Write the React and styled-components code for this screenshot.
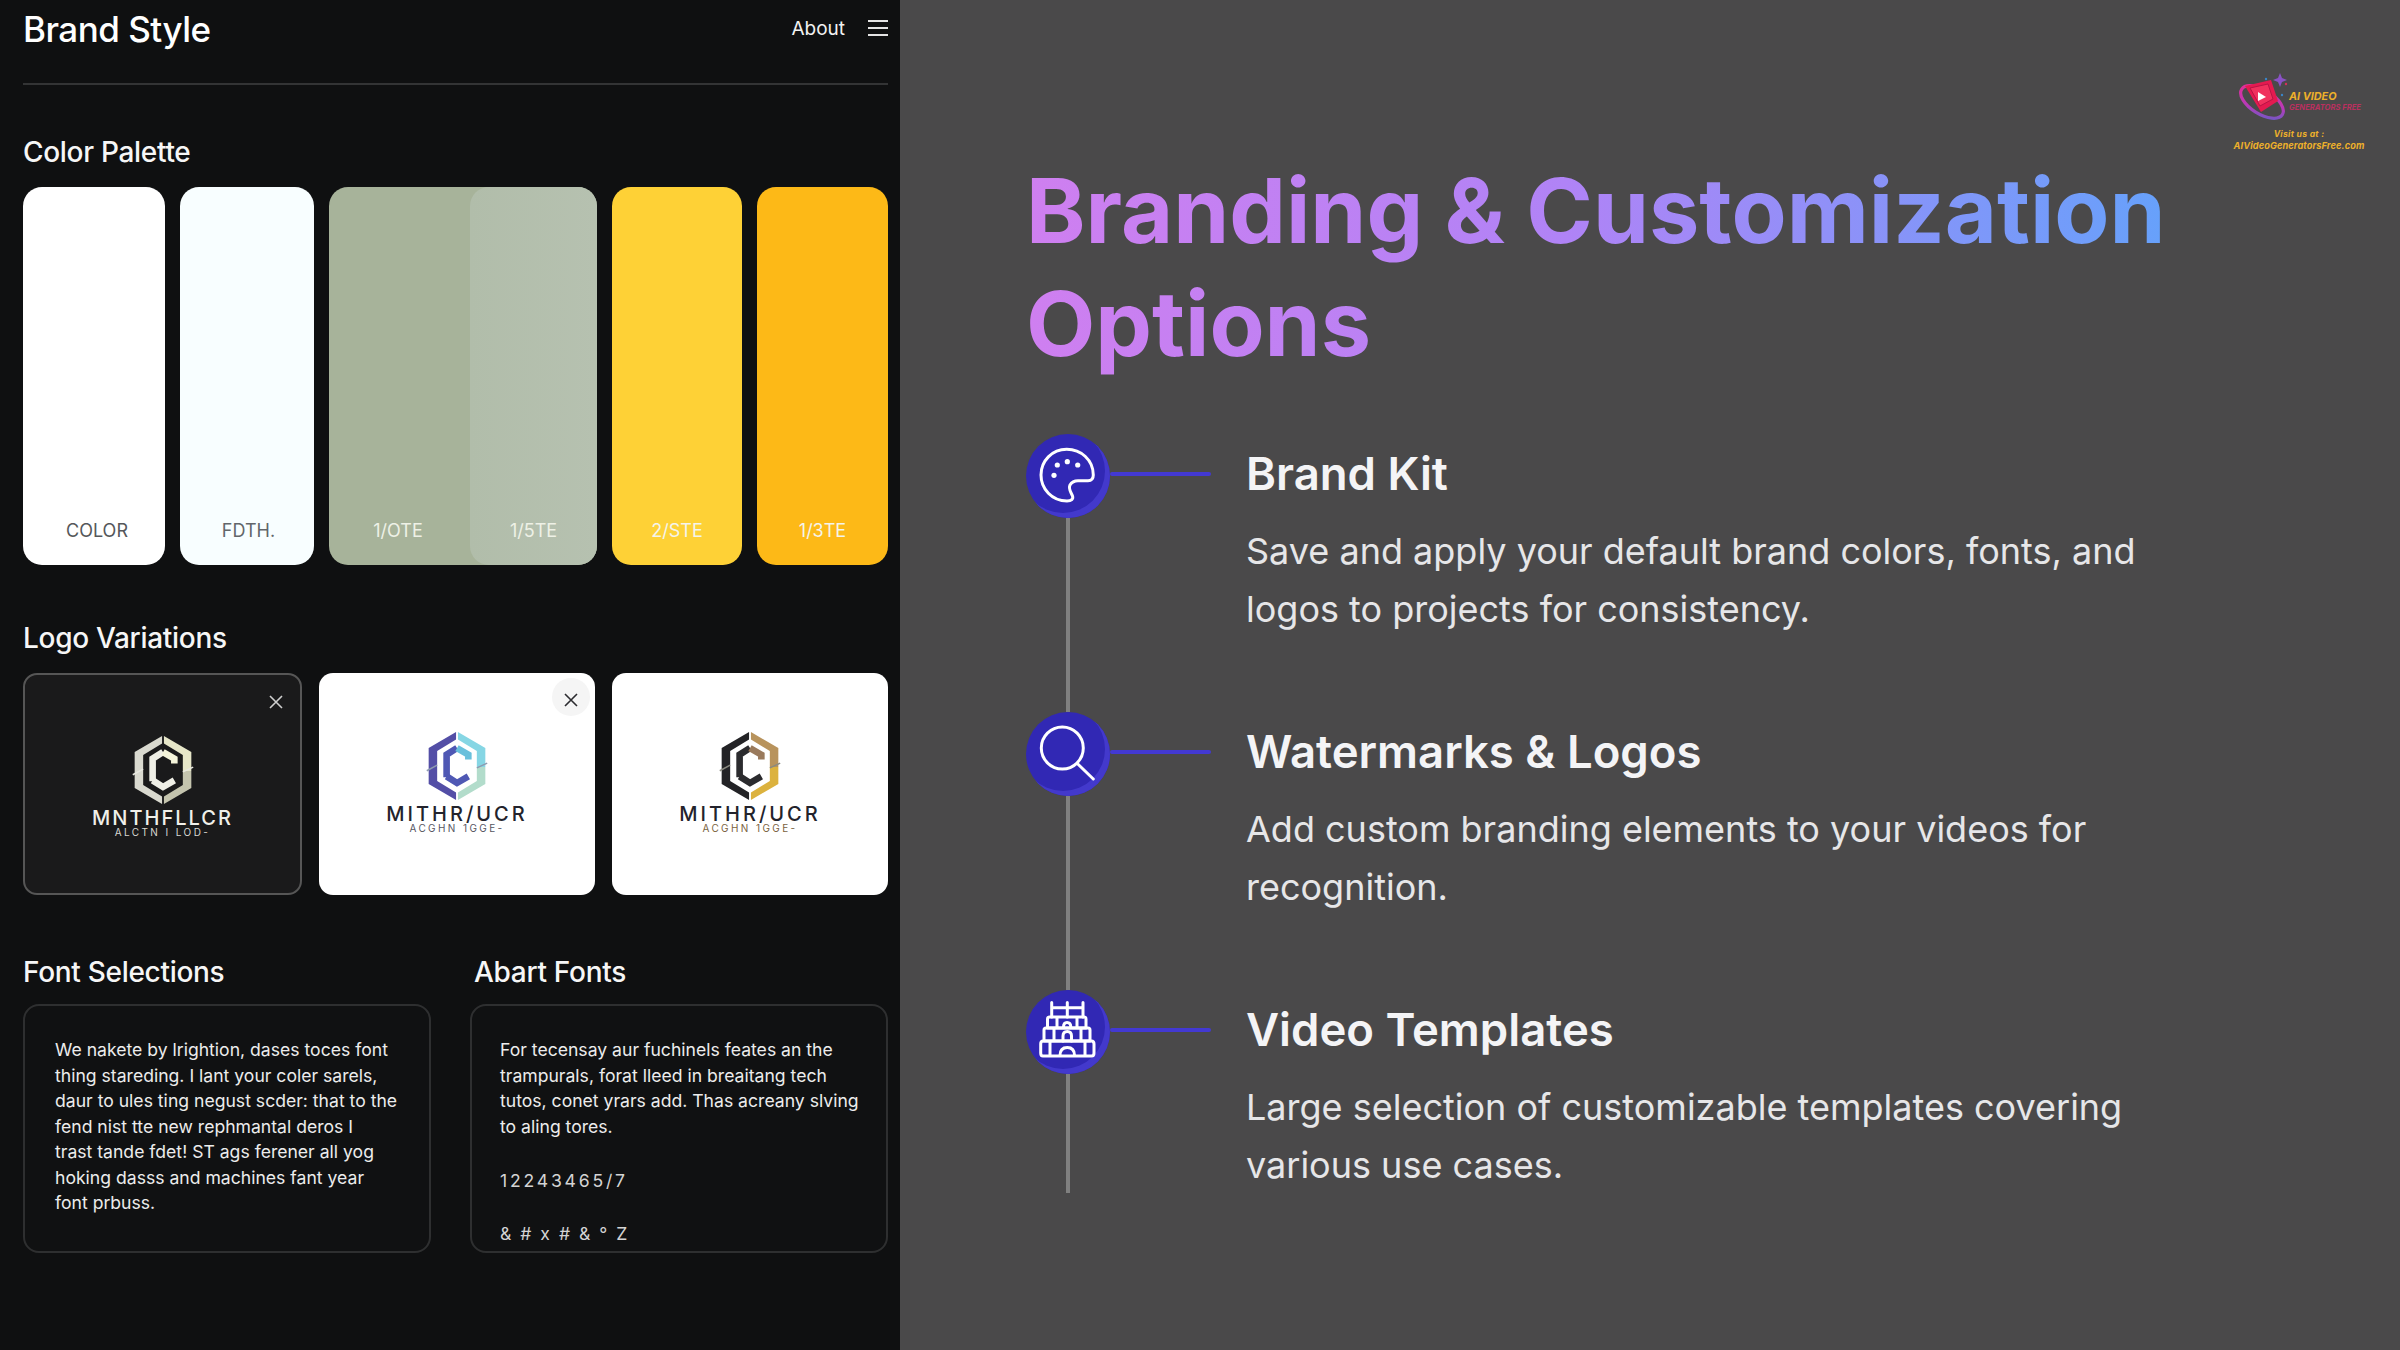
import React from "react";
import styled, { createGlobalStyle } from "styled-components";

const Global = createGlobalStyle`
  html, body { margin: 0; padding: 0; background: #4a494a; }
  body { font-family: Inter, "Liberation Sans", sans-serif; }
  * { box-sizing: border-box; }
`;

const Page = styled.div`
  display: grid;
  grid-template-columns: 900px 1500px;
  width: 2400px;
  height: 1350px;
  overflow: hidden;
`;

/* ---------- left panel ---------- */
const LeftPanel = styled.section`
  background: #0f1011;
  padding: 0 12px 0 23px;
  color: #fff;
`;
const Header = styled.header`
  height: 85px;
  border-bottom: 2px solid #333435;
  display: flex;
  justify-content: space-between;
  align-items: flex-start;
  padding-top: 8px;
`;
const BrandTitle = styled.h1`
  margin: 0;
  font-size: 35px;
  line-height: 42px;
  font-weight: 500;
  letter-spacing: -0.5px;
`;
const Nav = styled.nav`
  display: flex;
  align-items: center;
  gap: 23px;
  height: 40px;
`;
const NavLink = styled.span`
  font-size: 19px;
  font-weight: 400;
  color: #f2f2f2;
`;
const MenuIcon = styled.svg`
  width: 20px;
  height: 18px;
  display: block;
`;
const SectionTitle = styled.h2`
  margin: ${(p) => p.$top}px 0 ${(p) => p.$bottom}px ${(p) => p.$left || 0}px;
  font-size: 28px;
  line-height: 36px;
  font-weight: 500;
  letter-spacing: -0.3px;
  color: #f6f6f6;
`;
const SwatchRow = styled.div`
  display: flex;
  gap: 15px;
  height: 378px;
`;
const Swatch = styled.div`
  width: ${(p) => p.$w}px;
  flex: none;
  border-radius: 19px;
  background: ${(p) => p.$bg};
  display: flex;
  align-items: flex-end;
  justify-content: center;
  padding: 0 0 22px ${(p) => p.$nudge || 0}px;
  font-size: 18px;
  line-height: 24px;
  color: ${(p) => p.$ink || "#f4f4ec"};
`;
const SwatchPair = styled.div`
  width: 268px;
  flex: none;
  display: flex;
  border-radius: 19px;
  background: #a7b39a;
`;
const PairLeft = styled.div`
  flex: 1;
  display: flex;
  align-items: flex-end;
  justify-content: center;
  padding: 0 3px 22px 0;
  font-size: 18px;
  line-height: 24px;
  color: #eef1e6;
`;
const PairRight = styled.div`
  width: 127px;
  border-radius: 19px;
  background: linear-gradient(90deg, #b1bdaa, #b6c1b0);
  display: flex;
  align-items: flex-end;
  justify-content: center;
  padding: 0 0 22px 0;
  font-size: 18px;
  line-height: 24px;
  color: #eef1e6;
`;
const LogoRow = styled.div`
  display: flex;
  gap: 17px;
  height: 222px;
`;
const LogoCard = styled.div`
  position: relative;
  width: ${(p) => p.$w}px;
  flex: none;
  border-radius: 14px;
  background: ${(p) => (p.$dark ? "#1a1a1b" : "#ffffff")};
  border: ${(p) => (p.$dark ? "2px solid #565656" : "none")};
  color: ${(p) => (p.$dark ? "#f0f0ea" : "#23232c")};
  display: flex;
  flex-direction: column;
  align-items: center;
  padding-top: ${(p) => p.$top}px;
`;
const HexSvg = styled.svg`
  width: 62px;
  height: 68px;
  display: block;
`;
const LogoName = styled.div`
  margin-top: 3px;
  font-size: 20px;
  line-height: 22px;
  font-weight: 500;
  letter-spacing: ${(p) => p.$ls}px;
  white-space: nowrap;
`;
const LogoSub = styled.div`
  margin-top: -2px;
  font-size: 10px;
  line-height: 11px;
  letter-spacing: 2.4px;
  white-space: nowrap;
  color: ${(p) => p.$ink};
`;
const CloseBtn = styled.div`
  position: absolute;
  top: 5px;
  right: 5px;
  width: 38px;
  height: 38px;
  padding-top: 5px;
  border-radius: 50%;
  background: ${(p) => (p.$pale ? "#f5f5f5" : "transparent")};
  display: flex;
  align-items: center;
  justify-content: center;
`;
const FontGrid = styled.div`
  display: grid;
  grid-template-columns: 408px 418px;
  column-gap: 39px;
`;
const FontCard = styled.div`
  height: 249px;
  border: 2px solid #2e2f30;
  border-radius: 16px;
  background: #101112;
  padding: 31px 0 0 ${(p) => p.$pad}px;
  font-size: 17.6px;
  line-height: 25.5px;
  color: #ececec;
  overflow: hidden;
`;
const TextLine = styled.div`
  white-space: nowrap;
`;
const Specimen = styled.div`
  margin-top: ${(p) => p.$top}px;
  white-space: nowrap;
  letter-spacing: ${(p) => p.$ls}px;
  color: #d4d4d4;
`;

/* ---------- right panel ---------- */
const RightPanel = styled.section`
  position: relative;
  background: #4a494a;
  padding: 154px 0 0 126px;
`;
const MainTitle = styled.h1`
  margin: 0 0 54px;
  width: 1200px;
  font-size: 90px;
  line-height: 113px;
  font-weight: 700;
  background: linear-gradient(90deg, #cf7ff0 0%, #b083f6 45%, #5fa4fb 100%);
  -webkit-background-clip: text;
  background-clip: text;
  color: transparent;
`;
const Timeline = styled.div`
  display: flex;
  flex-direction: column;
`;
const Item = styled.article`
  display: flex;
  height: 278px;
  &:last-child { height: 203px; }
`;
const Marker = styled.div`
  width: 84px;
  flex: none;
  display: flex;
  flex-direction: column;
  align-items: center;
`;
const Bubble = styled.div`
  width: 84px;
  height: 84px;
  flex: none;
  border-radius: 50%;
  background: #3128b4;
  box-shadow: inset -5px -5px 0 #4339cc;
  display: flex;
  align-items: center;
  justify-content: center;
`;
const BubbleIcon = styled.svg`
  width: 84px;
  height: 84px;
  display: block;
`;
const Rail = styled.div`
  width: 4px;
  flex: 1;
  background: #808080;
`;
const Connector = styled.div`
  width: 101px;
  height: 4px;
  flex: none;
  margin-top: 38px;
  border-radius: 2px;
  background: #4339d2;
`;
const ItemBody = styled.div`
  margin-left: 35px;
  padding-top: 12px;
`;
const ItemTitle = styled.h3`
  margin: 0 0 20px;
  font-size: 45.5px;
  line-height: 56px;
  font-weight: 600;
  color: #f4f4f6;
`;
const ItemLine = styled.div`
  font-size: 36px;
  line-height: 58px;
  color: #e6e6e8;
  white-space: nowrap;
`;

/* corner logo */
const Corner = styled.div`
  position: absolute;
  top: 70px;
  right: 34px;
  width: 134px;
  display: flex;
  flex-direction: column;
  align-items: center;
  font-style: italic;
  font-weight: 700;
  color: #edb02a;
`;
const CornerTop = styled.div`
  display: flex;
  align-self: flex-start;
  height: 50px;
`;
const CornerMark = styled.svg`
  width: 60px;
  height: 50px;
  flex: none;
  display: block;
`;
const CornerWords = styled.div`
  margin: 21px 0 0 -3px;
  display: flex;
  flex-direction: column;
`;
const CornerBig = styled.div`
  font-size: 10.8px;
  line-height: 12px;
  white-space: nowrap;
`;
const CornerPink = styled.div`
  font-size: 7.6px;
  line-height: 9px;
  color: #b9305f;
  white-space: nowrap;
`;
const CornerVisit = styled.div`
  margin-top: ${(p) => p.$top}px;
  font-size: ${(p) => p.$size}px;
  line-height: 11px;
  letter-spacing: ${(p) => p.$ls}px;
  white-space: nowrap;
`;

/* ---------- drawings ---------- */
const Hex = ({ left, right, low, inner, top, slash }) => (
  <HexSvg viewBox="0 0 64 72" aria-hidden="true">
    <polygon points="31,0 31,8 11,20 11,52 31,64 31,72 2,55 2,17" fill={left} />
    <polygon points="33,0 62,17 62,37 53,37 53,20 33,8" fill={right} />
    <polygon points="62,37 62,55 33,72 33,64 53,52 53,37" fill={low} />
    <polyline points="21,48 21,24 32,17" fill="none" stroke={inner} strokeWidth="7" />
    <polyline points="21,47 32,54 44,47" fill="none" stroke={inner} strokeWidth="7" />
    <polyline points="32,17 44,24 44,29" fill="none" stroke={top} strokeWidth="7" />
    <line x1="0" y1="41" x2="11" y2="35" stroke={slash} strokeWidth="1.6" />
    <line x1="53" y1="38" x2="64" y2="33" stroke={slash} strokeWidth="1.6" />
  </HexSvg>
);

const X = ({ ink }) => (
  <svg width="14" height="14" viewBox="0 0 14 14" aria-hidden="true">
    <path d="M1 1 L13 13 M13 1 L1 13" stroke={ink} strokeWidth="1.6" fill="none" />
  </svg>
);

const PaletteIcon = () => (
  <BubbleIcon viewBox="0 0 84 84" fill="none" stroke="#fff" strokeWidth="3" aria-hidden="true">
    <path d="M67.3 41 C67.3 26 55 15.3 40.7 15.3 C26 15.3 15 27 15 41 C15 55 26 67 41 67 C45.5 67 47.5 65 46.5 62 C45 58 42 55 44 51 C46 47.5 49 46.7 52 46.7 L62 46.7 C65.5 46.7 67.3 44.5 67.3 41 Z" />
    <g fill="#fff" stroke="none">
      <circle cx="31.3" cy="31" r="2.6" />
      <circle cx="41.3" cy="27.7" r="2.6" />
      <circle cx="51.7" cy="31" r="2.6" />
      <circle cx="28" cy="41.3" r="2.6" />
    </g>
  </BubbleIcon>
);

const SearchIcon = () => (
  <BubbleIcon viewBox="0 0 84 84" fill="none" stroke="#fff" strokeWidth="3" strokeLinecap="round" aria-hidden="true">
    <circle cx="36.3" cy="36" r="21" />
    <line x1="51.3" y1="51.5" x2="67.3" y2="67" />
  </BubbleIcon>
);

const TempleIcon = () => (
  <BubbleIcon viewBox="0 0 84 84" fill="none" stroke="#fff" strokeWidth="3" strokeLinejoin="round" strokeLinecap="round" aria-hidden="true">
    <path d="M25.7 27 V12.5 M41.3 27 V12.5 M57 27 V12.5 M25.7 17.8 H57" />
    <path d="M23.5 27 H58.5 Q60 27 60 29 V38 H21.5 V29 Q21.5 27 23.5 27 Z" />
    <path d="M31 27.5 V37 M51 27.5 V37" />
    <path d="M37.5 37 Q37.5 32.5 41 32.5 Q44.8 32.5 44.8 37" />
    <path d="M20 38 H62 Q64 38 64 40 V51 H18 V40 Q18 38 20 38 Z" />
    <path d="M28 38.5 V50.5 M55 38.5 V50.5" />
    <path d="M37 51 V46 Q37 41.5 41.3 41.5 Q45.5 41.5 45.5 46 V51" />
    <path d="M17 51 H65.5 Q68 51 68 54 V63 Q68 66 65.5 66 H17 Q14.7 66 14.7 63 V54 Q14.7 51 17 51 Z" />
    <path d="M24 51.5 V65.5 M59 51.5 V65.5" />
    <path d="M34 65.5 Q34 57.5 41.3 57.5 Q48.5 57.5 48.5 65.5" />
  </BubbleIcon>
);

const CornerLogo = () => (
  <Corner>
    <CornerTop>
      <CornerMark viewBox="0 0 60 50" aria-hidden="true">
        <defs>
          <linearGradient id="swoosh" x1="0" y1="0" x2="1" y2="1">
            <stop offset="0" stopColor="#ef2a8c" />
            <stop offset="0.6" stopColor="#b83ab8" />
            <stop offset="1" stopColor="#5b62c8" />
          </linearGradient>
        </defs>
        <ellipse cx="30" cy="32" rx="24" ry="12" transform="rotate(32 30 32)" fill="none" stroke="url(#swoosh)" strokeWidth="3.2" />
        <polygon points="13,16 39,10 46,31 29,42" fill="#e41a50" />
        <polygon points="18,18 36,14 41,29 28,36" fill="#f0315e" stroke="#b81445" strokeWidth="1" />
        <polygon points="26,22 34,27 26,31" fill="#fff" />
        <path d="M48 3 L50 8 L55 10 L50 12 L48 17 L46 12 L41 10 L46 8 Z" fill="#8a52c6" />
        <circle cx="34" cy="9" r="1.2" fill="#3a86c8" />
        <circle cx="54" cy="14" r="1.2" fill="#d8305a" />
        <circle cx="50" cy="25" r="1.2" fill="#3a86c8" />
      </CornerMark>
      <CornerWords>
        <CornerBig>AI VIDEO</CornerBig>
        <CornerPink>GENERATORS FREE</CornerPink>
      </CornerWords>
    </CornerTop>
    <CornerVisit $top={9} $size={8.6} $ls={0.3}>Visit us at :</CornerVisit>
    <CornerVisit $top={0} $size={9.2} $ls={0.1}>AIVideoGeneratorsFree.com</CornerVisit>
  </Corner>
);

const bodyLeft = [
  "We nakete by lrightion, dases toces font",
  "thing stareding. I lant  your coler sarels,",
  "daur to ules ting negust scder: that to the",
  "fend nist tte new rephmantal deros I",
  "trast tande fdet! ST ags ferener all yog",
  "hoking dasss and machines fant year",
  "font prbuss.",
];
const bodyRight = [
  "For tecensay aur fuchinels feates an the",
  "trampurals, forat lleed in breaitang tech",
  "tutos, conet yrars add. Thas acreany slving",
  "to aling tores.",
];

const items = [
  {
    title: "Brand Kit",
    lines: ["Save and apply your default brand colors, fonts, and", "logos to projects for consistency."],
    Icon: PaletteIcon,
  },
  {
    title: "Watermarks & Logos",
    lines: ["Add custom branding elements to your videos for", "recognition."],
    Icon: SearchIcon,
  },
  {
    title: "Video Templates",
    lines: ["Large selection of customizable templates covering", "various use cases."],
    Icon: TempleIcon,
  },
];

export default function App() {
  return (
    <Page>
      <Global />
      <LeftPanel>
        <Header>
          <BrandTitle>Brand Style</BrandTitle>
          <Nav>
            <NavLink>About</NavLink>
            <MenuIcon viewBox="0 0 20 18" aria-hidden="true">
              <path d="M0 2 H20 M0 9 H20 M0 16 H20" stroke="#e4e4e4" strokeWidth="2" />
            </MenuIcon>
          </Nav>
        </Header>

        <SectionTitle $top={49} $bottom={17}>Color Palette</SectionTitle>
        <SwatchRow>
          <Swatch $w={142} $bg="#ffffff" $ink="#55575a" $nudge={6}>COLOR</Swatch>
          <Swatch $w={134} $bg="#f8feff" $ink="#62666a" $nudge={3}>FDTH.</Swatch>
          <SwatchPair>
            <PairLeft>1/OTE</PairLeft>
            <PairRight>1/5TE</PairRight>
          </SwatchPair>
          <Swatch $w={130} $bg="#fed136">2/STE</Swatch>
          <Swatch $w={131} $bg="#fdb917">1/3TE</Swatch>
        </SwatchRow>

        <SectionTitle $top={55} $bottom={17}>Logo Variations</SectionTitle>
        <LogoRow>
          <LogoCard $w={279} $dark $top={61}>
            <Hex left="#d9d9cf" right="#e6e6c8" low="#c4c4ae" inner="#efefe6" top="#f4f4da" slash="#e8e8e0" />
            <LogoName $ls={2}>MNTHFLLCR</LogoName>
            <LogoSub $ink="#d8d8d2">ALCTN I LOD-</LogoSub>
            <CloseBtn><X ink="#cfcfcf" /></CloseBtn>
          </LogoCard>
          <LogoCard $w={276} $top={59}>
            <Hex left="#534ea6" right="#86d6e4" low="#b2dccb" inner="#4f58b4" top="#69c0dc" slash="#8d9ab0" />
            <LogoName $ls={3}>MITHR/UCR</LogoName>
            <LogoSub $ink="#55555f">ACGHN 1GGE-</LogoSub>
            <CloseBtn $pale><X ink="#2c2c30" /></CloseBtn>
          </LogoCard>
          <LogoCard $w={276} $top={59}>
            <Hex left="#232326" right="#b8935c" low="#dcb23e" inner="#2b2b2e" top="#9a7a5c" slash="#8a8a80" />
            <LogoName $ls={3}>MITHR/UCR</LogoName>
            <LogoSub $ink="#7a6240">ACGHN 1GGE-</LogoSub>
          </LogoCard>
        </LogoRow>

        <FontGrid>
          <div>
            <SectionTitle $top={59} $bottom={14}>Font Selections</SectionTitle>
            <FontCard $pad={30}>
              {bodyLeft.map((l) => <TextLine key={l}>{l}</TextLine>)}
            </FontCard>
          </div>
          <div>
            <SectionTitle $top={59} $bottom={14} $left={4}>Abart Fonts</SectionTitle>
            <FontCard $pad={28}>
              {bodyRight.map((l) => <TextLine key={l}>{l}</TextLine>)}
              <Specimen $top={29} $ls={2.8}>12243465/7</Specimen>
              <Specimen $top={27} $ls={2}>&amp; # x # &amp; ° Z</Specimen>
            </FontCard>
          </div>
        </FontGrid>
      </LeftPanel>

      <RightPanel>
        <CornerLogo />
        <MainTitle>Branding &amp; Customization Options</MainTitle>
        <Timeline>
          {items.map(({ title, lines, Icon }) => (
            <Item key={title}>
              <Marker>
                <Bubble><Icon /></Bubble>
                <Rail />
              </Marker>
              <Connector />
              <ItemBody>
                <ItemTitle>{title}</ItemTitle>
                {lines.map((l) => <ItemLine key={l}>{l}</ItemLine>)}
              </ItemBody>
            </Item>
          ))}
        </Timeline>
      </RightPanel>
    </Page>
  );
}
